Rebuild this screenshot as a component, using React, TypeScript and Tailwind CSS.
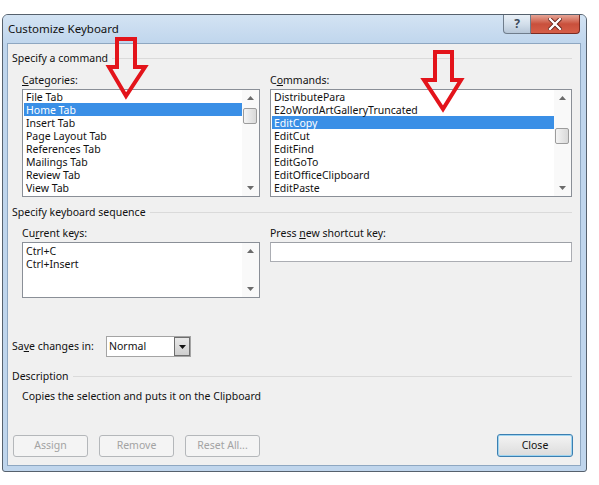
import React from "react";

const FONT = { fontFamily: '"Noto Sans", "Open Sans", sans-serif' };

type ListProps = {
  items: string[];
  selected: number;
  thumbTop: number;
  className: string;
};

function ScrollArrow({ up }: { up: boolean }) {
  return (
    <svg width="7" height="4" viewBox="0 0 7 4" className="block">
      {up ? (
        <path d="M0 4 L3.5 0 L7 4 Z" fill="#6b6b6b" />
      ) : (
        <path d="M0 0 L7 0 L3.5 4 Z" fill="#6b6b6b" />
      )}
    </svg>
  );
}

function ScrollBar({ thumbTop }: { thumbTop?: number }) {
  return (
    <div className="relative w-[17px] h-full bg-[#f9f9f9]">
      <div className="absolute top-[6px] left-0 w-full flex justify-center">
        <ScrollArrow up />
      </div>
      {thumbTop !== undefined && (
        <div
          className="absolute left-[1px] w-[14px] h-[16px] rounded-[2px] border border-[#9c9c9c] bg-gradient-to-r from-[#f4f4f4] to-[#d9d9d9]"
          style={{ top: thumbTop }}
        />
      )}
      <div className="absolute bottom-[6px] left-0 w-full flex justify-center">
        <ScrollArrow up={false} />
      </div>
    </div>
  );
}

function ListBox({ items, selected, thumbTop, className }: ListProps) {
  return (
    <div className={`flex border border-[#8a8f97] bg-white ${className}`}>
      <div className="flex-1 pl-[1px] overflow-hidden">
        {items.map((item, i) => (
          <div
            key={item}
            className={`h-[13px] leading-[14px] pl-[2px] whitespace-nowrap text-[10.5px] ${
              i === selected ? "bg-[#3a8fe6] text-white" : "text-[#111]"
            }`}
          >
            {item}
          </div>
        ))}
      </div>
      <ScrollBar thumbTop={thumbTop} />
    </div>
  );
}

function GroupHeader({ text, className }: { text: string; className: string }) {
  return (
    <div className={`flex items-center h-[16px] pl-[4px] pr-[8px] ${className}`}>
      <span className="text-[10.5px] leading-[16px] text-[#111] whitespace-nowrap">{text}</span>
      <div className="flex-1 h-px bg-[#dadada] ml-[4px]" />
    </div>
  );
}

function Label({ children }: { children: React.ReactNode }) {
  return <div className="h-[16px] leading-[17px] text-[10.5px] text-[#111] whitespace-nowrap">{children}</div>;
}

function DisabledButton({ label }: { label: string }) {
  return (
    <div className="w-[75px] h-[22px] rounded-[3px] border border-[#b4b7ba] bg-[#f4f4f4] flex items-center justify-center text-[10.5px] text-[#a3a3a3]">
      {label}
    </div>
  );
}

export default function App() {
  return (
    <div className="relative w-[599px] h-[485px] bg-white overflow-hidden pt-[14px] pl-[2px]" style={FONT}>
      {/* dialog window */}
      <div className="w-[585px] h-[458px] flex flex-col border border-[#56616d] rounded-t-[6px] rounded-b-[3px] bg-[#bfd5ec]">
        {/* caption bar */}
        <div className="h-[28px] flex items-start bg-gradient-to-b from-[#d3e3f3] to-[#c0d6ed] rounded-t-[5px]">
          <div className="h-[28px] flex items-center pl-[5px] text-[11.5px] text-[#111] flex-1">Customize Keyboard</div>
          <div className="flex mr-[6px]">
            <div className="w-[28px] h-[19px] border border-t-0 border-[#6f7d8c] rounded-bl-[4px] bg-gradient-to-b from-[#e9f0f7] via-[#d3dfeb] to-[#b7c7d8] flex items-center justify-center text-[12px] font-bold text-[#3b4a5a]">
              ?
            </div>
            <div className="w-[49px] h-[19px] border border-t-0 border-l-0 border-[#7a2b22] rounded-br-[4px] bg-gradient-to-b from-[#e5a597] via-[#c9503c] to-[#d65e48] flex items-center justify-center">
              <svg width="14" height="12" viewBox="0 0 14 12">
                <path d="M2 1 L12 11 M12 1 L2 11" stroke="#5a1a12" strokeWidth="4" strokeLinecap="square" />
                <path d="M2 1 L12 11 M12 1 L2 11" stroke="#ffffff" strokeWidth="2.4" strokeLinecap="square" />
              </svg>
            </div>
          </div>
        </div>

        {/* client area */}
        <div className="flex-1 mx-[4px] mr-[5px] mb-[5px] border border-[#8ea7c1] bg-[#f0f0f0] flex flex-col">
          <GroupHeader text="Specify a command" className="mt-[6px]" />

          <div className="flex gap-[10px] pl-[14px] mt-[6px]">
            <div className="w-[238px]">
              <Label>
                <span className="underline">C</span>ategories:
              </Label>
              <ListBox
                className="mt-[1px] h-[108px]"
                selected={1}
                thumbTop={18}
                items={[
                  "File Tab",
                  "Home Tab",
                  "Insert Tab",
                  "Page Layout Tab",
                  "References Tab",
                  "Mailings Tab",
                  "Review Tab",
                  "View Tab",
                ]}
              />
            </div>
            <div className="w-[302px]">
              <Label>
                C<span className="underline">o</span>mmands:
              </Label>
              <ListBox
                className="mt-[1px] h-[108px]"
                selected={2}
                thumbTop={38}
                items={[
                  "DistributePara",
                  "E2oWordArtGalleryTruncated",
                  "EditCopy",
                  "EditCut",
                  "EditFind",
                  "EditGoTo",
                  "EditOfficeClipboard",
                  "EditPaste",
                ]}
              />
            </div>
          </div>

          <GroupHeader text="Specify keyboard sequence" className="mt-[7px]" />

          <div className="flex gap-[10px] pl-[14px] mt-[5px]">
            <div className="w-[238px]">
              <Label>
                Cu<span className="underline">r</span>rent keys:
              </Label>
              <div className="mt-[1px] h-[56px] flex border border-[#8a8f97] bg-white">
                <div className="flex-1 pl-[3px] pt-[2px] text-[10.5px] leading-[13px] text-[#111]">
                  <div>Ctrl+C</div>
                  <div>Ctrl+Insert</div>
                </div>
                <ScrollBar />
              </div>
            </div>
            <div className="w-[302px]">
              <Label>
                Press <span className="underline">n</span>ew shortcut key:
              </Label>
              <div className="mt-[1px] h-[20px] border border-[#abadb3] border-t-[#9da0a6] bg-white" />
            </div>
          </div>

          <div className="flex items-center pl-[4px] mt-[38px] h-[21px]">
            <span className="text-[10.5px] text-[#111] w-[94px] whitespace-nowrap">
              Sa<span className="underline">v</span>e changes in:
            </span>
            <div className="w-[85px] h-[21px] flex border border-[#a4a4a4] bg-white">
              <div className="flex-1 pl-[2px] text-[10.5px] leading-[19px] text-[#111]">Normal</div>
              <div className="w-[16px] h-[19px] border border-[#6e6e6e] bg-gradient-to-b from-[#e8e8e8] to-[#cfcfcf] flex items-center justify-center">
                <svg width="7" height="4" viewBox="0 0 7 4">
                  <path d="M0 0 L7 0 L3.5 4 Z" fill="#111" />
                </svg>
              </div>
            </div>
          </div>

          <GroupHeader text="Description" className="mt-[11px]" />

          <div className="pl-[14px] mt-[4px] h-[16px] leading-[16px] text-[10.5px] text-[#111]">
            Copies the selection and puts it on the Clipboard
          </div>

          <div className="mt-auto mb-[8px] flex items-center pl-[5px] pr-[7px]">
            <div className="flex gap-[11px]">
              <DisabledButton label="Assign" />
              <DisabledButton label="Remove" />
              <DisabledButton label="Reset All..." />
            </div>
            <div className="ml-auto w-[76px] h-[23px] rounded-[3px] border border-[#3c7fb1] shadow-[inset_0_0_0_1px_#9ed4f0] bg-gradient-to-b from-[#f4f4f4] to-[#dcdcdc] flex items-center justify-center text-[10.5px] text-[#111]">
              Close
            </div>
          </div>
        </div>
      </div>

      {/* red callout arrows */}
      <svg className="absolute left-0 top-0 pointer-events-none" width="599" height="485" viewBox="0 0 599 485">
        <polygon
          points="117,39 135,39 135,67 145,67 126,96 109,67 117,67"
          fill="none"
          stroke="#e3141b"
          strokeWidth="4"
          strokeLinejoin="miter"
        />
        <polygon
          points="435,52 452,52 452,80 461,80 443,109 424,80 435,80"
          fill="none"
          stroke="#e3141b"
          strokeWidth="4"
          strokeLinejoin="miter"
        />
      </svg>
    </div>
  );
}
